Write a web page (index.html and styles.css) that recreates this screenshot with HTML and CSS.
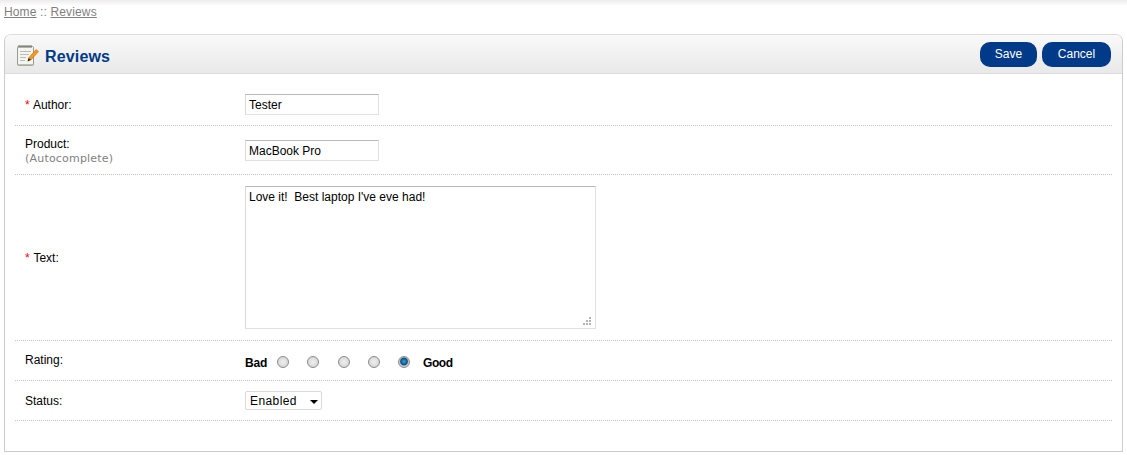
FILE: index.html
```html
<!DOCTYPE html>
<html lang="en">
<head>
<meta charset="utf-8">
<title>Reviews</title>
<link rel="stylesheet" href="styles.css">
</head>
<body>
<div class="breadcrumb"><a href="#">Home</a> :: <a href="#">Reviews</a></div>
<div class="box">
  <div class="heading">
    <h1>
      <svg class="note" width="24" height="24" viewBox="0 0 24 24" aria-hidden="true">
        <rect x="2.500" y="3.500" width="16" height="19" rx="1" fill="#f4f4f0" stroke="#9a9a94"/>
        <rect x="3" y="21" width="15" height="1.500" fill="#bdbdb6"/>
        <path d="M4 2v3M6 2v3M8 2v3M10 2v3M12 2v3M14 2v3M16 2v3" stroke="#6f6f68" stroke-width="1"/>
        <path d="M5 8.500h11M5 11.500h9M5 14.500h6M5 17.500h5" stroke="#bcbcb4" stroke-width="1"/>
        <path d="M13.500 15l7.500-8.500 2.500 2-7.500 8.500z" fill="#f39a1c" stroke="#c06e10" stroke-width=".6"/>
        <path d="M13.500 15l2.500 2-3.500 1.500z" fill="#2e2418"/>
      </svg>
      <span class="title">Reviews</span>
    </h1>
    <div class="buttons">
      <a class="btn btn-save" href="#">Save</a>
      <a class="btn btn-cancel" href="#">Cancel</a>
    </div>
  </div>
  <form class="form">
    <div class="row row-author">
      <div class="label"><span class="req">*</span> Author:</div>
      <div class="field"><input class="text" type="text" value="Tester"></div>
    </div>
    <div class="row row-product">
      <div class="label">Product:<span class="help">(Autocomplete)</span></div>
      <div class="field"><input class="text" type="text" value="MacBook Pro"></div>
    </div>
    <div class="row row-text">
      <div class="label"><span class="req">*</span> Text:</div>
      <div class="field area-wrap">
        <textarea class="area">Love it!  Best laptop I've eve had!</textarea>
        <svg class="grip" width="9" height="9" viewBox="0 0 9 9" aria-hidden="true">
          <path d="M6 0h2v2H6zM3 3h2v2H3zM6 3h2v2H6zM0 6h2v2H0zM3 6h2v2H3zM6 6h2v2H6z" fill="#b4b4b4"/>
        </svg>
      </div>
    </div>
    <div class="row row-rating">
      <div class="label">Rating:</div>
      <div class="field rating">
        <b class="bad">Bad</b>
        <span class="radio"></span>
        <span class="radio"></span>
        <span class="radio"></span>
        <span class="radio"></span>
        <span class="radio on"></span>
        <b class="good">Good</b>
      </div>
    </div>
    <div class="row row-status">
      <div class="label">Status:</div>
      <div class="field"><div class="select">Enabled<span class="caret"></span></div></div>
    </div>
  </form>
</div>
</body>
</html>
```
FILE: styles.css
```css
html, body { margin: 0; padding: 0; }
body {
  background: #fff;
  font-family: "Liberation Sans", Arial, sans-serif;
  font-size: 12px;
  color: #000;
  height: 455px;
  overflow: hidden;
  background-image: linear-gradient(#ececec, #fff);
  background-size: 100% 6px;
  background-repeat: no-repeat;
}
.breadcrumb {
  height: 34px;
  padding: 5px 0 0 4px;
  box-sizing: border-box;
  line-height: 15px;
  color: #7f7f7f;
  letter-spacing: .14px;
}
.breadcrumb a { color: #7f7f7f; text-decoration: underline; }
.box {
  margin: 0 4px;
  height: 418px;
  box-sizing: border-box;
  border: 1px solid #ccc;
  border-top-color: #dcdcdc;
  border-radius: 7px 7px 0 0;
}
.heading {
  height: 39px;
  box-sizing: border-box;
  display: flex;
  justify-content: space-between;
  align-items: center;
  padding: 0 11px 0 10px;
  background: linear-gradient(#f9f9f9, #e9e9e9);
  border-bottom: 1px solid #dcdcdc;
  border-radius: 6px 6px 0 0;
}
h1 {
  margin: 2px 0 0;
  display: flex;
  align-items: center;
  gap: 6px;
  font-size: 16px;
  font-weight: bold;
  color: #003a88;
  letter-spacing: .15px;
}
.title { padding-top: 4px; }
.buttons { display: flex; gap: 5px; }
.btn {
  height: 25px;
  line-height: 25px;
  background: #003a88;
  color: #fff;
  text-decoration: none;
  border-radius: 10px;
  text-align: center;
}
.btn-save { width: 57px; }
.btn-cancel { width: 69px; }
.form { padding: 0 10px; }
.row {
  display: flex;
  align-items: center;
  border-bottom: 1px dotted #c4c4c4;
  box-sizing: border-box;
}
.row-author { height: 52px; padding-top: 9px; }
.row-product { height: 49px; }
.row-text { height: 166px; }
.row-rating { height: 40px; }
.row-status { height: 40px; }
.label {
  width: 230px;
  padding: 2px 0 0 10px;
  box-sizing: border-box;
  line-height: 15px;
}
.row-product .label { padding-top: 3px; }
.row-rating .label { padding-top: 0; }
.req { color: #f00; margin-right: .6px; }
.help {
  display: block;
  margin-top: -1px;
  color: #7f7f7f;
  font-family: "DejaVu Sans", Verdana, sans-serif;
  font-size: 11px;
  letter-spacing: .2px;
}
.field { display: flex; align-items: center; }
.area-wrap { position: relative; }
.text, .area {
  font-family: "Liberation Sans", Arial, sans-serif;
  font-size: 12px;
  color: #000;
  box-sizing: border-box;
  border: 1px solid #e0e0ea;
  border-top-color: #b8b8b8;
  border-left-color: #d8d8e0;
  padding: 3px 3px 1px;
  margin: 0;
  outline: 0;
  background: #fff;
}
.text { width: 134px; height: 21px; }
.area { width: 351px; height: 143px; padding-top: 3px; resize: none; display: block; }
.grip { position: absolute; right: 4px; bottom: 3px; }
.rating { padding-top: 4px; }
.bad { width: 32px; letter-spacing: -.2px; }
.radio {
  width: 12px;
  height: 12px;
  box-sizing: border-box;
  border: 1px solid #8c8c8c;
  border-radius: 50%;
  background: radial-gradient(circle at 50% 50%, #f0f0f0 0, #d8d8d8 70%, #c0c0c0 100%);
  margin: -2px 18.250px 0 0;
}
.radio.on {
  background: radial-gradient(circle at 50% 45%, #39a3d8 0, #0b4f86 45%, #c8c8c8 60%, #d0d0d0 100%);
  margin-right: 13px;
}
.good { letter-spacing: -.4px; }
.select {
  width: 77px;
  height: 19px;
  box-sizing: border-box;
  border: 1px solid #d8d8e0;
  border-radius: 2px;
  padding-left: 4px;
  line-height: 19px;
  position: relative;
  letter-spacing: .4px;
}
.caret {
  position: absolute;
  right: 3px;
  top: 8px;
  border-left: 4px solid transparent;
  border-right: 4px solid transparent;
  border-top: 4px solid #000;
}
```
